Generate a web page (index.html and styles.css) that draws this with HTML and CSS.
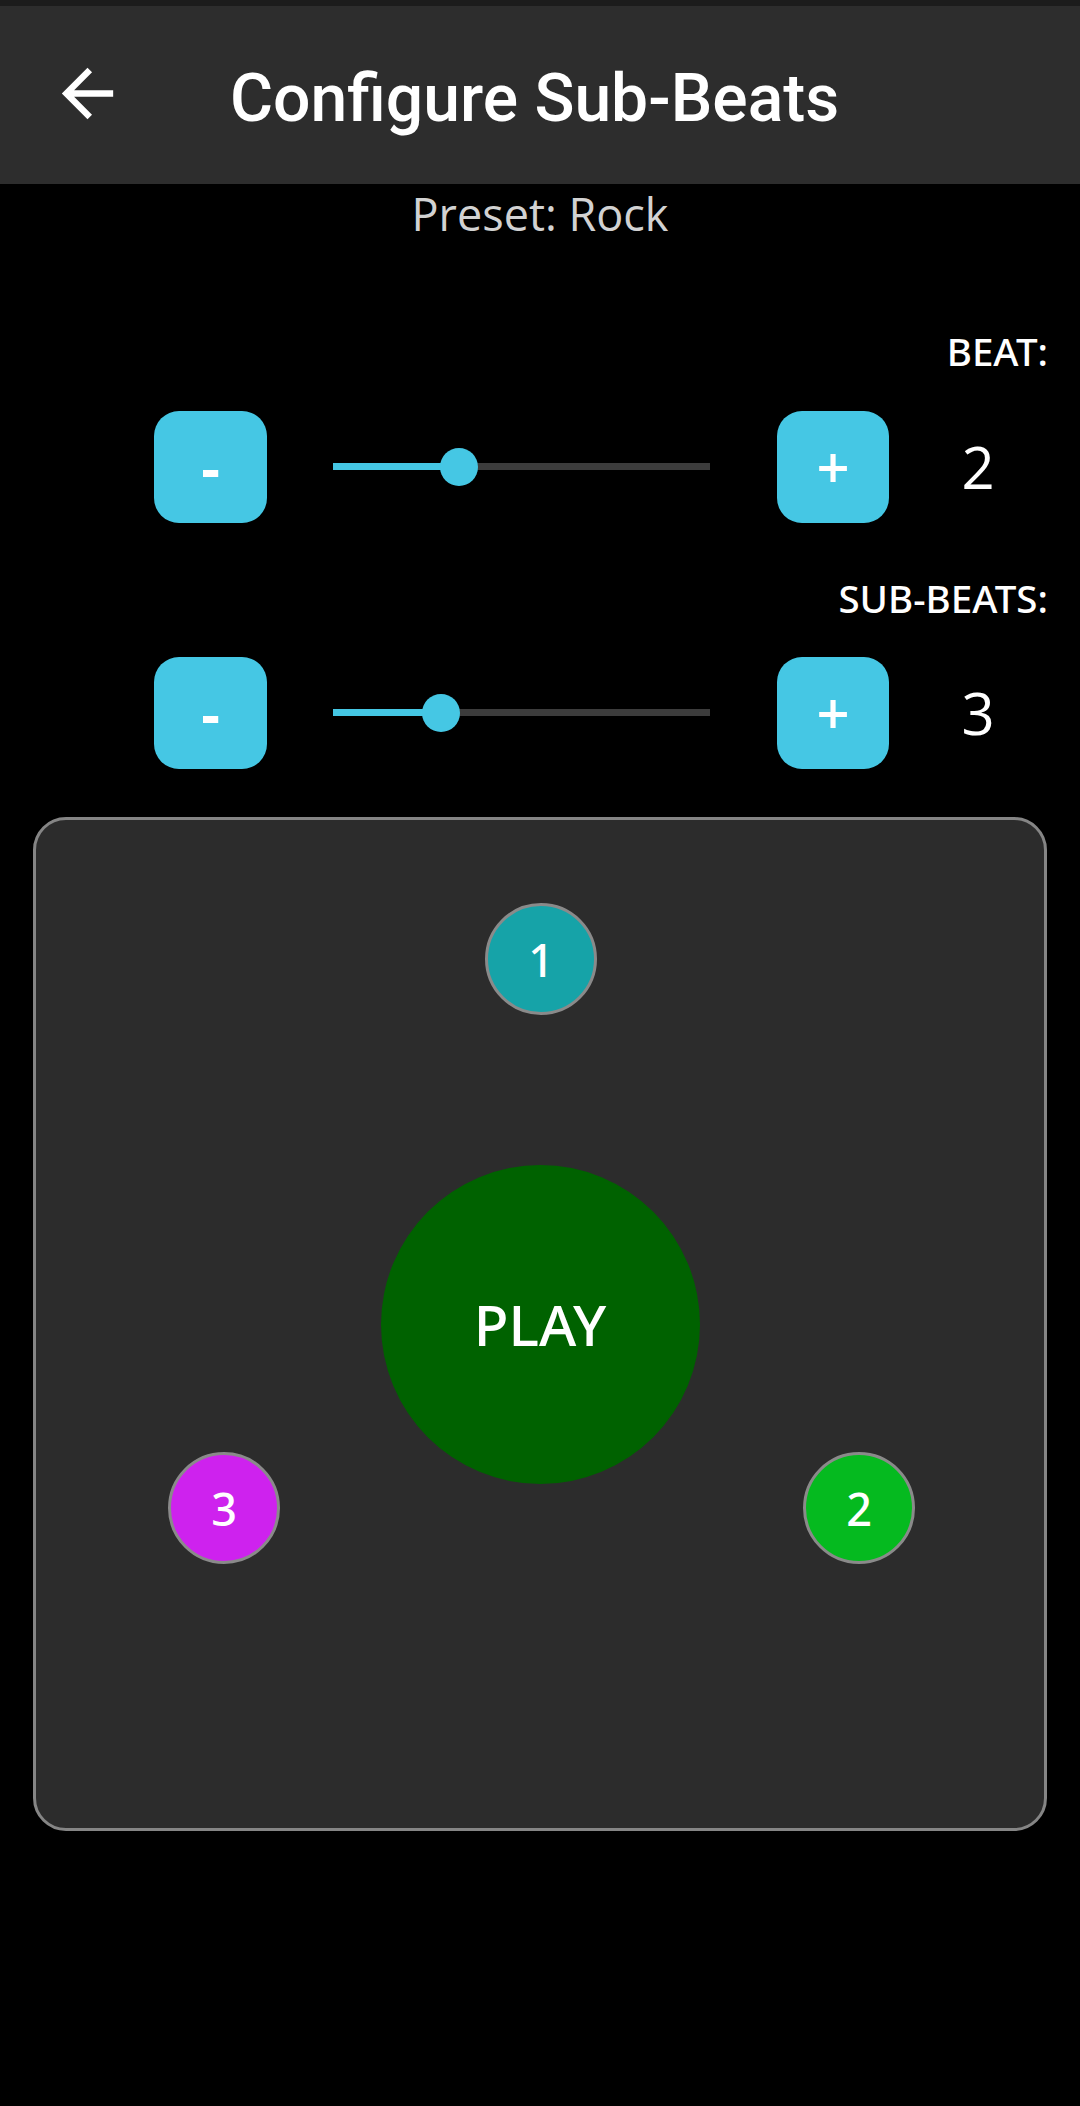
FILE: index.html
```html
<!DOCTYPE html>
<html lang="en">
<head>
<meta charset="utf-8">
<title>Configure Sub-Beats</title>
<link rel="stylesheet" href="styles.css">
</head>
<body>
<div class="statusbar"></div>
<header class="appbar">
  <svg class="back" viewBox="0 0 24 24" aria-label="Back"><path d="M20 11H7.83l5.59-5.59L12 4l-8 8 8 8 1.41-1.41L7.83 13H20v-2z" fill="#ffffff"/></svg>
  <h1 class="title">Configure Sub-Beats</h1>
</header>
<div class="preset">Preset: Rock</div>

<section class="controls">
  <div class="label label-beat">BEAT:</div>
  <div class="row">
    <button class="step">-</button>
    <div class="slider">
      <div class="track"></div>
      <div class="fill" style="width:126px"></div>
      <div class="thumb" style="left:107px"></div>
    </div>
    <button class="step step-plus">+</button>
    <div class="value">2</div>
  </div>

  <div class="label label-sub">SUB-BEATS:</div>
  <div class="row">
    <button class="step">-</button>
    <div class="slider">
      <div class="track"></div>
      <div class="fill" style="width:108px"></div>
      <div class="thumb" style="left:89px"></div>
    </div>
    <button class="step step-plus">+</button>
    <div class="value">3</div>
  </div>
</section>

<section class="panel">
  <div class="bubble bubble-1">1</div>
  <div class="play">PLAY</div>
  <div class="bubble bubble-3">3</div>
  <div class="bubble bubble-2">2</div>
</section>
</body>
</html>
```
FILE: styles.css
```css
* { box-sizing: border-box; }

html, body {
  margin: 0;
  padding: 0;
  background: #000000;
}

body {
  width: 1080px;
  height: 2106px;
  font-family: "Open Sans", "Noto Sans", "DejaVu Sans", sans-serif;
  color: #ffffff;
  overflow: hidden;
}

.statusbar {
  height: 6px;
  background: #1c1c1c;
}

.appbar {
  height: 178px;
  background: #2d2d2d;
  display: flex;
  align-items: center;
}

.back {
  width: 77px;
  height: 77px;
  margin-left: 49px;
  margin-bottom: 3px;
  flex: none;
}

.title {
  margin: 0 0 0 104px;
  padding-top: 7px;
  font-family: Roboto, "Liberation Sans", sans-serif;
  font-weight: 500;
  font-size: 66px;
  line-height: normal;
  color: #ffffff;
}

.preset {
  text-align: center;
  font-size: 45px;
  line-height: 60px;
  color: #d2d2d2;
}

.controls {
  padding-top: 80px;
}

.label {
  text-align: right;
  padding-right: 32px;
  font-family: "Noto Sans", "Open Sans", sans-serif;
  font-size: 38.5px;
  font-weight: 500;
  line-height: 54px;
}

.label-beat { margin-bottom: 33px; }

.label-sub {
  margin-top: 48px;
  margin-bottom: 32px;
}

.row {
  display: flex;
  align-items: center;
  height: 112px;
  padding-left: 154px;
}

.step {
  width: 113px;
  height: 112px;
  flex: none;
  border: none;
  border-radius: 25px;
  background: #45c7e4;
  color: #ffffff;
  font-family: "Open Sans", "Noto Sans", sans-serif;
  font-size: 58px;
  font-weight: 700;
  line-height: 112px;
  padding: 0;
  text-align: center;
}

.step-plus {
  width: 112px;
  font-weight: 600;
}

.slider {
  position: relative;
  width: 377px;
  height: 38px;
  margin: 0 67px 0 66px;
  flex: none;
}

.track {
  position: absolute;
  left: 0;
  right: 0;
  top: 15px;
  height: 7px;
  background: #3c3c3c;
}

.fill {
  position: absolute;
  left: 0;
  top: 15px;
  height: 7px;
  background: #45c7e4;
}

.thumb {
  position: absolute;
  top: 0;
  width: 38px;
  height: 38px;
  border-radius: 50%;
  background: #45c7e4;
}

.value {
  width: 178px;
  text-align: center;
  font-size: 58px;
  line-height: 112px;
  flex: none;
}

.panel {
  position: relative;
  width: 1014px;
  height: 1014px;
  margin: 48px 33px 0 33px;
  background: #2c2c2c;
  border: 3px solid #858585;
  border-radius: 33px;
  display: flex;
  align-items: center;
  justify-content: center;
}

.play {
  width: 319px;
  height: 319px;
  border-radius: 50%;
  background: #006200;
  display: flex;
  align-items: center;
  justify-content: center;
  font-family: "Noto Sans", "Open Sans", sans-serif;
  font-size: 57px;
  font-weight: 500;
  color: #ffffff;
}

.bubble {
  position: absolute;
  width: 112px;
  height: 112px;
  border-radius: 50%;
  border: 3px solid #8a8a8a;
  display: flex;
  align-items: center;
  justify-content: center;
  font-family: "Noto Sans", "Open Sans", sans-serif;
  font-size: 45px;
  font-weight: 500;
  color: #ffffff;
}

.bubble-1 { left: 449px; top: 83px; background: #16a3a8; }
.bubble-3 { left: 132px; top: 632px; background: #ce22ee; }
.bubble-2 { left: 767px; top: 632px; background: #05ba1f; }
```
